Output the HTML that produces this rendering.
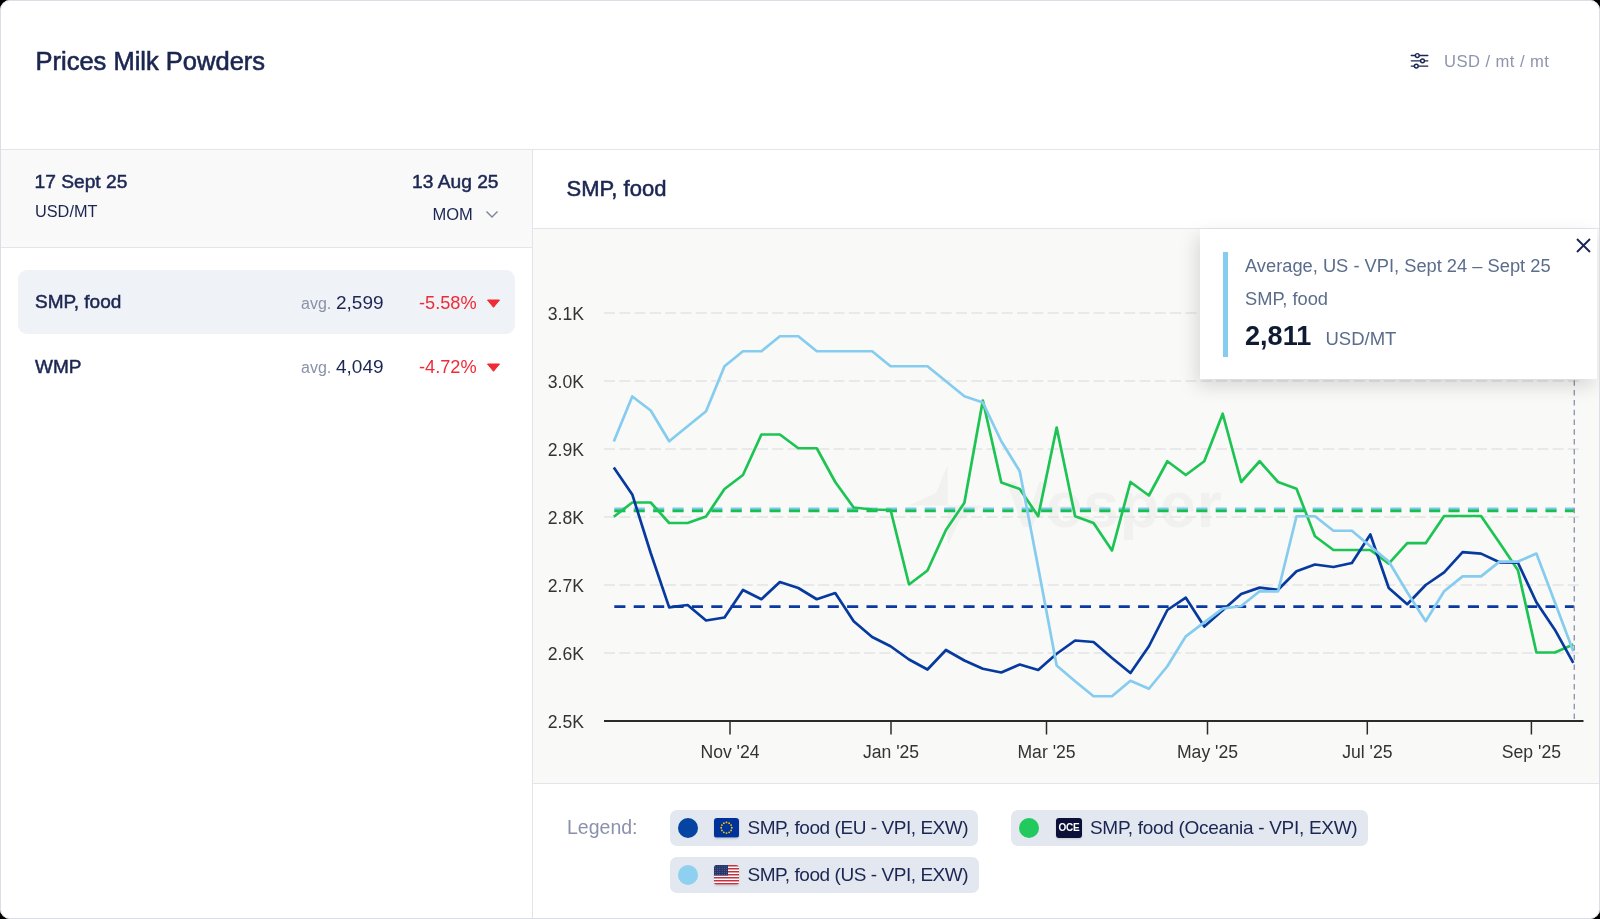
<!DOCTYPE html>
<html><head><meta charset="utf-8">
<style>
*{box-sizing:border-box;margin:0;padding:0}
html,body{width:1600px;height:919px;background:#000;overflow:hidden;font-family:"Liberation Sans",sans-serif;color:#1b2652}
#card{will-change:transform;position:absolute;left:0;top:0;width:1600px;height:919px;background:#fff;border-radius:10px;overflow:hidden}
#bord{position:absolute;left:0;top:0;width:1600px;height:919px;border:1px solid #dcdee5;border-radius:10px;pointer-events:none}
.abs{position:absolute;white-space:nowrap;line-height:1}
.hl{position:absolute;background:#e3e5ea}
.yl{position:absolute;left:500px;width:84px;text-align:right;font-size:17.6px;color:#333;line-height:26px;white-space:nowrap}
.xl{position:absolute;top:743.5px;width:100px;text-align:center;font-size:17.6px;color:#333;line-height:17px;white-space:nowrap}
.pill{position:absolute;height:36px;background:#e2e7f0;border-radius:7px}
.dot{position:absolute;width:20px;height:20px;border-radius:50%}
.flag{position:absolute;width:25px;height:19.5px;border-radius:3px;overflow:hidden;box-shadow:0 1px 2px rgba(0,0,0,.12)}
.lt{position:absolute;font-size:19px;letter-spacing:-0.45px;line-height:1;color:#1b2652;white-space:nowrap}
</style></head><body>
<div id="card">
  <div class="abs" style="left:35.5px;top:48.5px;font-size:25.5px;-webkit-text-stroke:0.6px #1b2650;color:#1b2650">Prices Milk Powders</div>
  <svg class="abs" style="left:1409px;top:51px" width="22" height="19" viewBox="0 0 22 19">
    <g stroke="#1b2652" stroke-width="1.45" fill="none" stroke-linecap="round">
      <line x1="2.3" y1="4.5" x2="6.4" y2="4.5"/><line x1="10.2" y1="4.5" x2="18.8" y2="4.5"/>
      <circle cx="8.3" cy="4.5" r="1.9" fill="#fff"/>
      <line x1="2.3" y1="9.85" x2="11.6" y2="9.85"/><line x1="15.4" y1="9.85" x2="18.8" y2="9.85"/>
      <circle cx="13.5" cy="9.85" r="1.9" fill="#fff"/>
      <line x1="2.3" y1="15.1" x2="5.4" y2="15.1"/><line x1="9.2" y1="15.1" x2="18.8" y2="15.1"/>
      <circle cx="7.3" cy="15.1" r="1.9" fill="#fff"/>
    </g>
  </svg>
  <div class="abs" style="left:1444px;top:54px;font-size:16.6px;letter-spacing:0.45px;color:#8d95ac">USD / mt / mt</div>
  <div class="hl" style="left:0;top:149px;width:1600px;height:1px"></div>
  <div style="position:absolute;left:0;top:150px;width:532px;height:97px;background:#f9f9fa"></div>
  <div class="hl" style="left:0;top:247px;width:532px;height:1px"></div>
  <div class="hl" style="left:532px;top:150px;width:1px;height:770px"></div>

  <div class="abs" style="left:34.5px;top:172px;font-size:19.2px;-webkit-text-stroke:0.5px #1b2652">17 Sept 25</div>
  <div class="abs" style="left:35px;top:203px;font-size:16.3px">USD/MT</div>
  <div class="abs" style="right:1101.5px;top:172px;font-size:19.2px;-webkit-text-stroke:0.5px #1b2652">13 Aug 25</div>
  <div class="abs" style="left:432.5px;top:205.5px;font-size:16.5px">MOM</div>
  <svg class="abs" style="left:485px;top:210px" width="14" height="9" viewBox="0 0 14 9"><polyline points="1.5,1.5 7,7 12.5,1.5" fill="none" stroke="#7b8399" stroke-width="1.4"/></svg>

  <div style="position:absolute;left:18px;top:270px;width:497px;height:64px;background:#eff2f7;border-radius:9px"></div>
  <div class="abs" style="left:35px;top:292px;font-size:19px;-webkit-text-stroke:0.5px #1b2652">SMP, food</div>
  <div class="abs" style="left:301px;top:296px;font-size:16px;color:#8a92a8">avg.</div>
  <div class="abs" style="left:336px;top:293px;font-size:19px">2,599</div>
  <div class="abs" style="left:419px;top:294px;font-size:18.2px;color:#ef2b36">-5.58%</div>
  <svg class="abs" style="left:487px;top:299px" width="13" height="9" viewBox="0 0 13 9"><polygon points="0.5,1 12.5,1 6.5,8.3" fill="#ef2b36" stroke="#ef2b36" stroke-width="1" stroke-linejoin="round"/></svg>

  <div class="abs" style="left:35px;top:356.5px;font-size:19px;-webkit-text-stroke:0.5px #1b2652">WMP</div>
  <div class="abs" style="left:301px;top:360px;font-size:16px;color:#8a92a8">avg.</div>
  <div class="abs" style="left:336px;top:357px;font-size:19px">4,049</div>
  <div class="abs" style="left:419px;top:358px;font-size:18.2px;color:#ef2b36">-4.72%</div>
  <svg class="abs" style="left:487px;top:363px" width="13" height="9" viewBox="0 0 13 9"><polygon points="0.5,1 12.5,1 6.5,8.3" fill="#ef2b36" stroke="#ef2b36" stroke-width="1" stroke-linejoin="round"/></svg>

  <div class="abs" style="left:566.5px;top:177.5px;font-size:22px;-webkit-text-stroke:0.55px #1b2652">SMP, food</div>
  <div class="hl" style="left:533px;top:228px;width:1067px;height:1px"></div>
  <div style="position:absolute;left:533px;top:229px;width:1067px;height:554px;background:#f9f9f8"></div>
  <div class="hl" style="left:533px;top:783px;width:1067px;height:1px"></div>

  <div class="abs" style="left:1006px;top:472px;font-size:65px;font-weight:bold;color:#f1f1f0;letter-spacing:0.5px">Vesper</div>
  <svg class="abs" style="left:0;top:0" width="1600" height="919">
    <path d="M947.6,465.3 L935.9,493 L908.7,505.6 L947.6,505.6 Z M947.6,505.6 L983.8,505.6 L959.8,520 L947.6,545.3 Z" fill="#f1f1f0"/>
    <line x1="604" y1="313" x2="1583" y2="313" stroke="#e3e3e3" stroke-width="1.5" stroke-dasharray="11,4.3"/><line x1="604" y1="381" x2="1583" y2="381" stroke="#e3e3e3" stroke-width="1.5" stroke-dasharray="11,4.3"/><line x1="604" y1="449" x2="1583" y2="449" stroke="#e3e3e3" stroke-width="1.5" stroke-dasharray="11,4.3"/><line x1="604" y1="517" x2="1583" y2="517" stroke="#e3e3e3" stroke-width="1.5" stroke-dasharray="11,4.3"/><line x1="604" y1="585" x2="1583" y2="585" stroke="#e3e3e3" stroke-width="1.5" stroke-dasharray="11,4.3"/><line x1="604" y1="653" x2="1583" y2="653" stroke="#e3e3e3" stroke-width="1.5" stroke-dasharray="11,4.3"/>
    <polyline points="614.3,508.8 1574,508.8" fill="none" stroke="#7fc6f2" stroke-width="2.8" stroke-dasharray="11.1,8.3"/>
    <polyline points="614.3,510.9 1574,510.9" fill="none" stroke="#16c04c" stroke-width="2.8" stroke-dasharray="11.1,8.3"/>
    <polyline points="614.3,606.6 1574,606.6" fill="none" stroke="#0a39a3" stroke-width="2.8" stroke-dasharray="11.1,8.3"/>
    <polyline points="613.80,516.75 632.25,502.50 650.70,502.50 669.16,523.00 687.61,523.00 706.06,516.50 724.51,489.00 742.96,475.00 761.42,434.50 779.87,434.50 798.32,448.25 816.77,448.25 835.22,482.00 853.68,507.50 872.13,509.50 890.58,510.00 909.03,584.50 927.48,570.50 945.94,530.00 964.39,502.80 982.84,400.50 1001.29,482.50 1019.74,489.00 1038.20,516.25 1056.65,427.50 1075.10,516.25 1093.55,523.00 1112.00,550.50 1130.46,482.00 1148.91,495.50 1167.36,461.25 1185.81,475.00 1204.26,461.25 1222.72,413.75 1241.17,482.00 1259.62,461.25 1278.07,482.00 1296.52,488.75 1314.98,536.25 1333.43,550.00 1351.88,550.00 1370.33,550.00 1388.78,563.60 1407.24,543.20 1425.69,543.20 1444.14,516.00 1462.59,516.00 1481.04,516.00 1499.50,542.80 1517.95,570.30 1536.40,652.50 1554.85,652.50 1573.30,644.50" fill="none" stroke="#1dc453" stroke-width="2.7" stroke-linejoin="round"/>
    <polyline points="613.80,467.50 632.25,494.40 650.70,553.00 669.16,607.40 687.61,605.00 706.06,620.50 724.51,617.50 742.96,590.00 761.42,599.25 779.87,582.00 798.32,588.00 816.77,599.25 835.22,593.00 853.68,621.25 872.13,637.00 890.58,646.25 909.03,659.50 927.48,669.50 945.94,650.00 964.39,660.50 982.84,668.75 1001.29,672.50 1019.74,664.50 1038.20,670.00 1056.65,653.75 1075.10,640.50 1093.55,642.00 1112.00,658.00 1130.46,673.00 1148.91,646.25 1167.36,610.00 1185.81,597.70 1204.26,626.50 1222.72,610.20 1241.17,594.00 1259.62,587.60 1278.07,589.80 1296.52,571.25 1314.98,564.50 1333.43,567.00 1351.88,563.00 1370.33,534.50 1388.78,588.00 1407.24,604.20 1425.69,585.00 1444.14,572.30 1462.59,552.20 1481.04,553.60 1499.50,562.30 1517.95,562.70 1536.40,602.30 1554.85,629.70 1573.30,662.80" fill="none" stroke="#073a9e" stroke-width="2.7" stroke-linejoin="round"/>
    <polyline points="613.80,441.50 632.25,396.50 650.70,410.50 669.16,441.25 687.61,426.25 706.06,411.25 724.51,366.25 742.96,351.25 761.42,351.25 779.87,336.25 798.32,336.25 816.77,351.25 835.22,351.25 853.68,351.25 872.13,351.25 890.58,366.25 909.03,366.25 927.48,366.25 945.94,381.25 964.39,396.25 982.84,402.50 1001.29,441.25 1019.74,471.25 1038.20,567.50 1056.65,665.50 1075.10,681.25 1093.55,696.25 1112.00,696.25 1130.46,680.75 1148.91,688.75 1167.36,666.25 1185.81,636.30 1204.26,622.40 1222.72,608.70 1241.17,606.00 1259.62,591.30 1278.07,591.30 1296.52,516.25 1314.98,516.25 1333.43,530.75 1351.88,530.75 1370.33,546.25 1388.78,561.50 1407.24,592.20 1425.69,621.20 1444.14,591.30 1462.59,576.40 1481.04,576.40 1499.50,561.60 1517.95,561.60 1536.40,553.60 1554.85,602.30 1573.30,651.40" fill="none" stroke="#85ccef" stroke-width="2.7" stroke-linejoin="round"/>
    <line x1="1574.3" y1="233.3" x2="1574.3" y2="721" stroke="#9097b0" stroke-width="1.4" stroke-dasharray="5.5,4.3"/>
    <line x1="604" y1="721" x2="1583.5" y2="721" stroke="#2b2b2b" stroke-width="1.8"/>
    <line x1="730" y1="721" x2="730" y2="734.5" stroke="#2b2b2b" stroke-width="1.5"/><line x1="891" y1="721" x2="891" y2="734.5" stroke="#2b2b2b" stroke-width="1.5"/><line x1="1046.5" y1="721" x2="1046.5" y2="734.5" stroke="#2b2b2b" stroke-width="1.5"/><line x1="1207.5" y1="721" x2="1207.5" y2="734.5" stroke="#2b2b2b" stroke-width="1.5"/><line x1="1367.3" y1="721" x2="1367.3" y2="734.5" stroke="#2b2b2b" stroke-width="1.5"/><line x1="1531.4" y1="721" x2="1531.4" y2="734.5" stroke="#2b2b2b" stroke-width="1.5"/>
  </svg>
  <div class="yl" style="top:300.5px">3.1K</div><div class="yl" style="top:368.5px">3.0K</div><div class="yl" style="top:436.5px">2.9K</div><div class="yl" style="top:504.5px">2.8K</div><div class="yl" style="top:572.5px">2.7K</div><div class="yl" style="top:640.5px">2.6K</div><div class="yl" style="top:708.5px">2.5K</div>
  <div class="xl" style="left:680px">Nov '24</div><div class="xl" style="left:841px">Jan '25</div><div class="xl" style="left:996.5px">Mar '25</div><div class="xl" style="left:1157.5px">May '25</div><div class="xl" style="left:1317.3px">Jul '25</div><div class="xl" style="left:1481.4px">Sep '25</div>

  <div style="position:absolute;left:1200px;top:229px;width:397px;height:150px;background:#fff;box-shadow:-3px 7px 18px rgba(0,0,0,0.14)"></div>
  <div style="position:absolute;left:1222.5px;top:251.5px;width:5.5px;height:105px;background:#85ccef"></div>
  <div class="abs" style="left:1245px;top:257px;font-size:18.3px;color:#5b6d8a">Average, US - VPI, Sept 24 – Sept 25</div>
  <div class="abs" style="left:1245px;top:290px;font-size:18.3px;color:#5b6d8a">SMP, food</div>
  <div class="abs" style="left:1245px;top:322px;font-size:27.1px;font-weight:bold;color:#0f1a33">2,811</div>
  <div class="abs" style="left:1325.5px;top:330px;font-size:18.5px;color:#5b6d8a">USD/MT</div>
  <svg class="abs" style="left:1575px;top:237px" width="17" height="17" viewBox="0 0 17 17"><path d="M2,2 L15,15 M15,2 L2,15" stroke="#1b2652" stroke-width="1.9"/></svg>

  <div class="abs" style="left:567px;top:818px;font-size:19.5px;color:#8a91aa">Legend:</div>

  <div class="pill" style="left:669.5px;top:809.5px;width:308px"></div>
  <div class="dot" style="left:677.5px;top:817.5px;background:#0544a3"></div>
  <svg class="flag" style="left:714px;top:818px" viewBox="0 0 25 19.5">
    <rect width="25" height="19.5" fill="#003399"/>
    <g fill="#ffcc00"><circle cx="12.50" cy="4.45" r="0.9"/><circle cx="15.15" cy="5.16" r="0.9"/><circle cx="17.09" cy="7.10" r="0.9"/><circle cx="17.80" cy="9.75" r="0.9"/><circle cx="17.09" cy="12.40" r="0.9"/><circle cx="15.15" cy="14.34" r="0.9"/><circle cx="12.50" cy="15.05" r="0.9"/><circle cx="9.85" cy="14.34" r="0.9"/><circle cx="7.91" cy="12.40" r="0.9"/><circle cx="7.20" cy="9.75" r="0.9"/><circle cx="7.91" cy="7.10" r="0.9"/><circle cx="9.85" cy="5.16" r="0.9"/></g>
  </svg>
  <div class="lt" style="left:747.5px;top:818px">SMP, food (EU - VPI, EXW)</div>

  <div class="pill" style="left:1011.25px;top:809.5px;width:356.25px"></div>
  <div class="dot" style="left:1019.25px;top:817.5px;background:#22c95c"></div>
  <div class="flag" style="left:1056px;top:818px;width:26px;background:#0a1038;color:#fff;font-size:10px;font-weight:bold;line-height:19.5px;text-align:center;letter-spacing:-0.3px">OCE</div>
  <div class="lt" style="left:1090px;top:818px;letter-spacing:-0.3px">SMP, food (Oceania - VPI, EXW)</div>

  <div class="pill" style="left:669.5px;top:857px;width:309.5px"></div>
  <div class="dot" style="left:677.5px;top:865px;background:#8dd0f0"></div>
  <svg class="flag" style="left:714px;top:865px" viewBox="0 0 25 19.5">
    <rect width="25" height="19.5" fill="#fff"/>
    <g fill="#c1343f"><rect x="0" y="0.00" width="25" height="1.5"/><rect x="0" y="3.00" width="25" height="1.5"/><rect x="0" y="6.00" width="25" height="1.5"/><rect x="0" y="9.00" width="25" height="1.5"/><rect x="0" y="12.00" width="25" height="1.5"/><rect x="0" y="15.00" width="25" height="1.5"/><rect x="0" y="18.00" width="25" height="1.5"/></g>
    <rect width="14" height="10.5" fill="#26356a"/><g fill="#fff" opacity="0.45"><circle cx="1.20" cy="1.10" r="0.45"/><circle cx="1.20" cy="3.20" r="0.45"/><circle cx="1.20" cy="5.30" r="0.45"/><circle cx="1.20" cy="7.40" r="0.45"/><circle cx="1.20" cy="9.50" r="0.45"/><circle cx="3.50" cy="1.10" r="0.45"/><circle cx="3.50" cy="3.20" r="0.45"/><circle cx="3.50" cy="5.30" r="0.45"/><circle cx="3.50" cy="7.40" r="0.45"/><circle cx="3.50" cy="9.50" r="0.45"/><circle cx="5.80" cy="1.10" r="0.45"/><circle cx="5.80" cy="3.20" r="0.45"/><circle cx="5.80" cy="5.30" r="0.45"/><circle cx="5.80" cy="7.40" r="0.45"/><circle cx="5.80" cy="9.50" r="0.45"/><circle cx="8.10" cy="1.10" r="0.45"/><circle cx="8.10" cy="3.20" r="0.45"/><circle cx="8.10" cy="5.30" r="0.45"/><circle cx="8.10" cy="7.40" r="0.45"/><circle cx="8.10" cy="9.50" r="0.45"/><circle cx="10.40" cy="1.10" r="0.45"/><circle cx="10.40" cy="3.20" r="0.45"/><circle cx="10.40" cy="5.30" r="0.45"/><circle cx="10.40" cy="7.40" r="0.45"/><circle cx="10.40" cy="9.50" r="0.45"/><circle cx="12.70" cy="1.10" r="0.45"/><circle cx="12.70" cy="3.20" r="0.45"/><circle cx="12.70" cy="5.30" r="0.45"/><circle cx="12.70" cy="7.40" r="0.45"/><circle cx="12.70" cy="9.50" r="0.45"/></g>
  </svg>
  <div class="lt" style="left:747.5px;top:865px">SMP, food (US - VPI, EXW)</div>
</div>
<div id="bord"></div>
</body></html>
